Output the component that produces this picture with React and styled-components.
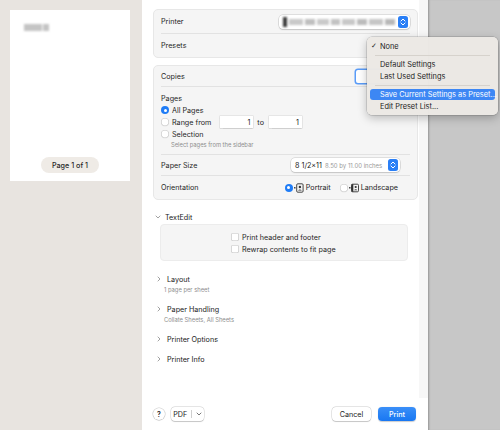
import React from "react";
import styled, { createGlobalStyle } from "styled-components";

const Global = createGlobalStyle`
  html, body { margin: 0; padding: 0; background: #c8c8c8; }
  #root { width: 500px; height: 430px; }
  * { box-sizing: border-box; }
`;

const Screen = styled.div`
  position: relative;
  display: flex;
  width: 500px;
  height: 430px;
  overflow: hidden;
  font-family: Inter, "Liberation Sans", sans-serif;
  font-size: 7.2px;
  color: #262626;
`;

/* ---------- preview ---------- */
const PreviewPane = styled.div`
  width: 142px;
  flex: none;
  background: #e8e4e0;
  padding: 10px 12px 0 10px;
`;
const PageSheet = styled.div`
  width: 120px;
  height: 171px;
  background: #fff;
  display: flex;
  flex-direction: column;
  align-items: center;
  justify-content: space-between;
  padding: 14px 0 8px;
`;
const Smudge = styled.div`
  align-self: flex-start;
  margin-left: 14px;
  display: flex;
  gap: 1px;
  filter: blur(1.2px);
  span { display: block; height: 7px; background: #c4c4c4; }
`;
const PagePill = styled.div`
  width: 58px;
  height: 16px;
  border-radius: 8px;
  background: #efebe6;
  display: flex;
  align-items: center;
  justify-content: center;
  font-weight: 500;
  color: #1f1f1f;
`;

/* ---------- dialog ---------- */
const Dialog = styled.div`
  width: 286px;
  flex: none;
  background: #fff;
  display: flex;
  flex-direction: column;
`;
const Body = styled.div`
  flex: 1;
  display: flex;
`;
const Content = styled.div`
  flex: 1;
  padding: 9px 1px 0 11px;
  display: flex;
  flex-direction: column;
`;
const Track = styled.div`
  width: 9px;
  background: #f7f7f7;
`;
const Card = styled.div`
  background: #f5f5f5;
  border: 1px solid #e7e7e7;
  border-radius: 5px;
  padding: 0 7px;
  margin-bottom: ${(p) => p.$mb || 0}px;
`;
const Row = styled.div`
  height: ${(p) => p.$h}px;
  display: flex;
  align-items: center;
  justify-content: space-between;
  border-bottom: ${(p) => (p.$last ? "none" : "1px solid #e2e2e2")};
  padding-right: ${(p) => p.$pr || 0}px;
`;
const Label = styled.span`
  color: #262626;
`;
const PopUp = styled.div`
  width: ${(p) => p.$w}px;
  height: 14px;
  background: #fff;
  border-radius: 4px;
  box-shadow: 0 0 0 0.5px rgba(0,0,0,0.18), 0 1px 1.5px rgba(0,0,0,0.12);
  display: flex;
  align-items: center;
  padding: 0 2px 0 4px;
  gap: 3px;
`;
const Redacted = styled.div`
  flex: 1;
  display: flex;
  align-items: center;
  gap: 2px;
  filter: blur(0.9px);
`;
const RedBlock = styled.span`
  display: block;
  height: ${(p) => p.$h || 6}px;
  width: ${(p) => p.$w}px;
  background: ${(p) => p.$c};
`;
const PopText = styled.span`
  flex: 1;
  color: #222;
  white-space: nowrap;
  small { font-size: 6px; color: #9a9a9a; margin-left: 3px; }
`;
const CopiesField = styled.div`
  width: 54px;
  height: 13px;
  background: #fff;
  border-radius: 2px;
  box-shadow: 0 0 0 1.5px #5a9cf8;
`;
const PagesBlock = styled.div`
  padding: 5px 0;
  border-bottom: 1px solid #e2e2e2;
`;
const Line = styled.div`
  height: ${(p) => p.$h || 12}px;
  display: flex;
  align-items: center;
  gap: ${(p) => p.$gap || 0}px;
`;
const Radio = styled.span`
  width: 8px;
  height: 8px;
  border-radius: 50%;
  flex: none;
  background: ${(p) => (p.$on ? "#1f7cf6" : "#fff")};
  box-shadow: ${(p) => (p.$on ? "none" : "inset 0 0 0 0.6px #c4c4c4, 0 0.5px 0.5px rgba(0,0,0,0.06)")};
  display: flex;
  align-items: center;
  justify-content: center;
  &::after {
    content: "";
    width: 3px;
    height: 3px;
    border-radius: 50%;
    background: ${(p) => (p.$on ? "#fff" : "transparent")};
  }
`;
const NumField = styled.div`
  width: 33px;
  height: 12px;
  background: #fff;
  box-shadow: 0 0 0 0.5px rgba(0,0,0,0.12), 0 0.5px 1px rgba(0,0,0,0.1);
  display: flex;
  align-items: center;
  justify-content: flex-end;
  padding-right: 3px;
  margin-left: ${(p) => p.$ml || 0}px;
`;
const ToWord = styled.span`
  margin: 0 2px 0 1px;
`;
const Helper = styled.div`
  height: 9px;
  line-height: 9px;
  font-size: 5.8px;
  color: #8d8d8d;
  padding-left: 10px;
`;
const Orient = styled.div`
  display: flex;
  align-items: center;
  gap: 2px;
  margin-right: 2px;
`;
const OrientOpt = styled.span`
  display: flex;
  align-items: center;
  gap: 1.5px;
  margin-left: ${(p) => p.$ml || 0}px;
`;
const Disclosure = styled.div`
  height: 12px;
  display: flex;
  align-items: center;
  margin-top: ${(p) => p.$mt}px;
  padding-left: ${(p) => p.$pl}px;
  gap: ${(p) => p.$gap}px;
  color: #222;
`;
const SubText = styled.div`
  height: 10px;
  line-height: 10px;
  font-size: 5.8px;
  color: #8d8d8d;
  padding-left: 11px;
`;
const OptionsBox = styled.div`
  margin: 1px 10px 0 7px;
  height: 37px;
  background: #f5f5f5;
  border: 1px solid #ececec;
  border-radius: 4px;
  padding: 6px 0 0 70px;
`;
const Check = styled.span`
  width: 8px;
  height: 8px;
  border-radius: 2px;
  background: #fff;
  box-shadow: inset 0 0 0 0.6px #bdbdbd;
  flex: none;
`;

/* ---------- footer ---------- */
const Footer = styled.div`
  height: 32px;
  display: flex;
  align-items: center;
  padding: 0 12px 0 11px;
  gap: 7px;
`;
const HelpBtn = styled.span`
  width: 12px;
  height: 12px;
  border-radius: 50%;
  background: #fff;
  box-shadow: 0 0 0 0.5px rgba(0,0,0,0.2), 0 0.5px 1px rgba(0,0,0,0.15);
  display: flex;
  align-items: center;
  justify-content: center;
  font-weight: 600;
  font-size: 7px;
`;
const Btn = styled.span`
  height: 14px;
  width: ${(p) => p.$w}px;
  border-radius: 4px;
  background: ${(p) => (p.$primary ? "linear-gradient(#3a8ff8, #1877f2)" : "#fff")};
  color: ${(p) => (p.$primary ? "#fff" : "#222")};
  box-shadow: ${(p) => (p.$primary ? "0 0.5px 1px rgba(0,0,0,0.2)" : "0 0 0 0.5px rgba(0,0,0,0.18), 0 0.5px 1px rgba(0,0,0,0.15)")};
  display: flex;
  align-items: center;
  justify-content: center;
  font-weight: ${(p) => (p.$primary ? 500 : 400)};
  margin-left: ${(p) => p.$ml || 0}px;
  gap: 4px;
`;
const Spacer = styled.div`
  flex: 1;
`;
const VSep = styled.span`
  width: 0.6px;
  height: 8px;
  background: #cfcfcf;
`;

/* ---------- backdrop + menu ---------- */
const Backdrop = styled.div`
  flex: 1;
  background: #c7c7c7;
  box-shadow: inset 2px 0 2px -1px rgba(0,0,0,0.25);
`;
const Menu = styled.div`
  position: absolute;
  left: 367px;
  top: 37px;
  width: 131px;
  height: 78px;
  background: rgba(236, 233, 228, 0.98);
  border-radius: 5px;
  box-shadow: 0 0 0 0.5px rgba(0,0,0,0.22), 0 3px 10px rgba(0,0,0,0.25);
  padding: 3px 3px;
  font-size: 7.4px;
`;
const MenuItem = styled.div`
  height: ${(p) => (p.$hl ? 11 : 12)}px;
  margin: ${(p) => (p.$hl ? "1px 0 0" : "0")};
  display: flex;
  align-items: center;
  padding-left: ${(p) => (p.$check ? 1 : 10)}px;
  border-radius: 3px;
  background: ${(p) => (p.$hl ? "#3d87f4" : "transparent")};
  color: ${(p) => (p.$hl ? "#fff" : "#232323")};
  white-space: nowrap;
`;
const Tick = styled.span`
  font-family: "DejaVu Sans", sans-serif;
  font-size: 7px;
  width: 9px;
`;
const MenuSep = styled.div`
  height: 6px;
  display: flex;
  align-items: center;
  padding: 0 5px;
  &::after { content: ""; flex: 1; height: 1px; background: #d6d2cc; }
`;

/* ---------- icons ---------- */
const Stepper = () => (
  <svg width="10" height="12" viewBox="0 0 10 12">
    <rect x="0" y="0" width="10" height="12" rx="2.5" fill="#2a7ff6" />
    <path d="M3 5 L5 3 L7 5" stroke="#fff" strokeWidth="1" fill="none" strokeLinecap="round" strokeLinejoin="round" />
    <path d="M3 7 L5 9 L7 7" stroke="#fff" strokeWidth="1" fill="none" strokeLinecap="round" strokeLinejoin="round" />
  </svg>
);
const PortraitIcon = () => (
  <svg width="10" height="10" viewBox="0 0 10 10">
    <rect x="0" y="4" width="1.6" height="1.6" rx="0.6" fill="#333" />
    <rect x="2.7" y="0.8" width="6.4" height="8.4" rx="1.1" stroke="#333" strokeWidth="0.9" fill="none" />
    <circle cx="5.9" cy="4" r="1.2" fill="#333" />
    <path d="M4 7.6 Q5.9 5.2 7.8 7.6 Z" fill="#333" />
  </svg>
);
const LandscapeIcon = () => (
  <svg width="10" height="10" viewBox="0 0 10 10">
    <rect x="0" y="4" width="1.6" height="1.6" rx="0.6" fill="#333" />
    <rect x="2.5" y="1.2" width="7" height="7.6" rx="1.1" stroke="#333" strokeWidth="0.9" fill="none" />
    <rect x="2.5" y="1.2" width="1.8" height="7.6" fill="#333" />
    <circle cx="6.7" cy="4" r="1.1" fill="#333" />
    <path d="M5 7.3 Q6.7 5.2 8.4 7.3 Z" fill="#333" />
  </svg>
);
const ChevronRight = () => (
  <svg width="4" height="6" viewBox="0 0 4 6">
    <path d="M1 1 L3 3 L1 5" stroke="#8a8a8a" strokeWidth="0.8" fill="none" strokeLinecap="round" strokeLinejoin="round" />
  </svg>
);
const ChevronDown = ({ color = "#8a8a8a" }) => (
  <svg width="6" height="4" viewBox="0 0 6 4">
    <path d="M1 1 L3 3 L5 1" stroke={color} strokeWidth="0.8" fill="none" strokeLinecap="round" strokeLinejoin="round" />
  </svg>
);

export default function App() {
  return (
    <>
      <Global />
      <Screen>
        <PreviewPane>
          <PageSheet>
            <Smudge>
              <span style={{ width: 18 }} />
              <span style={{ width: 6 }} />
            </Smudge>
            <PagePill>Page 1 of 1</PagePill>
          </PageSheet>
        </PreviewPane>

        <Dialog>
          <Body>
            <Content>
              <Card $mb={7}>
                <Row $h={24}>
                  <Label>Printer</Label>
                  <PopUp $w={131}>
                    <Redacted>
                      <RedBlock $w={4} $h={10} $c="#3a3a3a" />
                      <RedBlock $w={14} $c="#c9c9c9" />
                      <RedBlock $w={10} $c="#bfbfbf" />
                      <RedBlock $w={12} $c="#cacaca" />
                      <RedBlock $w={9} $c="#c2c2c2" />
                      <RedBlock $w={13} $c="#c8c8c8" />
                      <RedBlock $w={10} $c="#bcbcbc" />
                      <RedBlock $w={14} $c="#c6c6c6" />
                      <RedBlock $w={10} $c="#b8b8b8" />
                    </Redacted>
                    <Stepper />
                  </PopUp>
                </Row>
                <Row $h={23} $last>
                  <Label>Presets</Label>
                </Row>
              </Card>

              <Card>
                <Row $h={21}>
                  <Label>Copies</Label>
                  <CopiesField />
                </Row>
                <PagesBlock>
                  <Line>Pages</Line>
                  <Line $gap={3}>
                    <Radio $on />
                    All Pages
                  </Line>
                  <Line $gap={3}>
                    <Radio />
                    Range from
                    <NumField $ml={6}>1</NumField>
                    <ToWord>to</ToWord>
                    <NumField>1</NumField>
                  </Line>
                  <Line $gap={3}>
                    <Radio />
                    Selection
                  </Line>
                  <Helper>Select pages from the sidebar</Helper>
                </PagesBlock>
                <Row $h={21} $pr={10}>
                  <Label>Paper Size</Label>
                  <PopUp $w={109}>
                    <PopText>
                      8 1/2x11<small>8.50 by 11.00 inches</small>
                    </PopText>
                    <Stepper />
                  </PopUp>
                </Row>
                <Row $h={23} $last $pr={10}>
                  <Label>Orientation</Label>
                  <Orient>
                    <OrientOpt>
                      <Radio $on />
                      <PortraitIcon />
                      Portrait
                    </OrientOpt>
                    <OrientOpt $ml={7}>
                      <Radio />
                      <LandscapeIcon />
                      Landscape
                    </OrientOpt>
                  </Orient>
                </Row>
              </Card>

              <Disclosure $mt={11} $pl={2} $gap={4}>
                <ChevronDown />
                TextEdit
              </Disclosure>
              <OptionsBox>
                <Line $gap={3}>
                  <Check />
                  Print header and footer
                </Line>
                <Line $gap={3}>
                  <Check />
                  Rewrap contents to fit page
                </Line>
              </OptionsBox>

              <Disclosure $mt={12} $pl={4} $gap={6}>
                <ChevronRight />
                Layout
              </Disclosure>
              <SubText>1 page per sheet</SubText>
              <Disclosure $mt={8} $pl={4} $gap={6}>
                <ChevronRight />
                Paper Handling
              </Disclosure>
              <SubText>Collate Sheets, All Sheets</SubText>
              <Disclosure $mt={8} $pl={4} $gap={6}>
                <ChevronRight />
                Printer Options
              </Disclosure>
              <Disclosure $mt={8} $pl={4} $gap={6}>
                <ChevronRight />
                Printer Info
              </Disclosure>
            </Content>
            <Track />
          </Body>

          <Footer>
            <HelpBtn>?</HelpBtn>
            <Btn $w={33} $ml={-1}>
              PDF
              <VSep />
              <ChevronDown color="#555" />
            </Btn>
            <Spacer />
            <Btn $w={39}>Cancel</Btn>
            <Btn $w={38} $primary>Print</Btn>
          </Footer>
        </Dialog>

        <Backdrop />

        <Menu>
          <MenuItem $check>
            <Tick>✓</Tick>None
          </MenuItem>
          <MenuSep />
          <MenuItem>Default Settings</MenuItem>
          <MenuItem>Last Used Settings</MenuItem>
          <MenuSep />
          <MenuItem $hl>Save Current Settings as Preset...</MenuItem>
          <MenuItem>Edit Preset List...</MenuItem>
        </Menu>
      </Screen>
    </>
  );
}
